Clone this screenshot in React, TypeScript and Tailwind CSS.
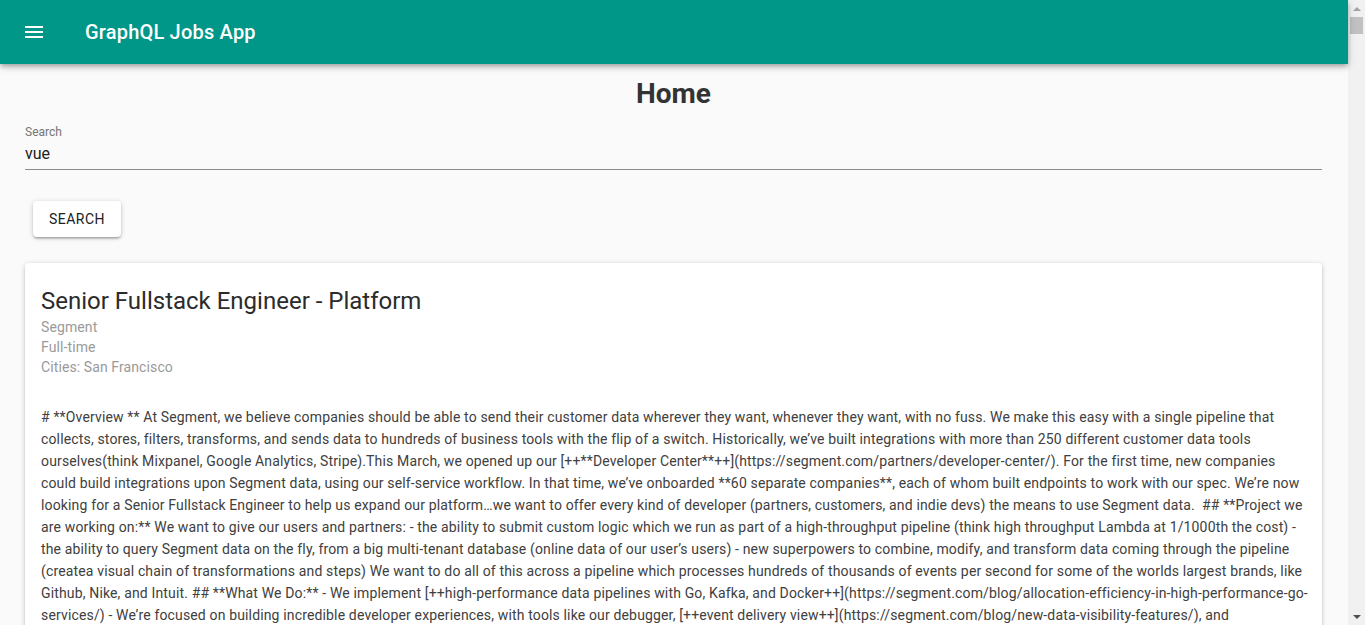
import React from 'react';

const description = [
  '# **Overview ** At Segment, we believe companies should be able to send their customer data wherever they want, whenever they want, with no fuss. We make this easy with a single pipeline that',
  'collects, stores, filters, transforms, and sends data to hundreds of business tools with the flip of a switch. Historically, we’ve built integrations with more than 250 different customer data tools',
  'ourselves(think Mixpanel, Google Analytics, Stripe).This March, we opened up our [++**Developer Center**++](https://segment.com/partners/developer-center/). For the first time, new companies',
  'could build integrations upon Segment data, using our self-service workflow. In that time, we’ve onboarded **60 separate companies**, each of whom built endpoints to work with our spec. We’re now',
  'looking for a Senior Fullstack Engineer to help us expand our platform…we want to offer every kind of developer (partners, customers, and indie devs) the means to use Segment data.  ## **Project we',
  'are working on:** We want to give our users and partners: - the ability to submit custom logic which we run as part of a high-throughput pipeline (think high throughput Lambda at 1/1000th the cost) -',
  'the ability to query Segment data on the fly, from a big multi-tenant database (online data of our user’s users) - new superpowers to combine, modify, and transform data coming through the pipeline',
  '(createa visual chain of transformations and steps) We want to do all of this across a pipeline which processes hundreds of thousands of events per second for some of the worlds largest brands, like',
  'Github, Nike, and Intuit. ## **What We Do:** - We implement [++high-performance data pipelines with Go, Kafka, and Docker++](https://segment.com/blog/allocation-efficiency-in-high-performance-go-',
  'services/) - We’re focused on building incredible developer experiences, with tools like our debugger, [++event delivery view++](https://segment.com/blog/new-data-visibility-features/), and',
];

function MenuIcon() {
  return (
    <svg viewBox="0 0 24 24" className="w-6 h-6 fill-white">
      <path d="M3 18h18v-2H3v2zm0-5h18v-2H3v2zm0-7v2h18V6H3z" />
    </svg>
  );
}

function Scrollbar() {
  return (
    <div className="w-[17px] h-full bg-[#f1f1f1] flex flex-col items-center shrink-0">
      <div className="h-[17px] flex items-center justify-center">
        <div className="w-0 h-0 border-l-[4px] border-r-[4px] border-b-[4px] border-l-transparent border-r-transparent border-b-[#a3a3a3]" />
      </div>
      <div className="w-[13px] h-[17px] bg-[#c1c1c1]" />
      <div className="flex-1" />
      <div className="h-[17px] flex items-center justify-center">
        <div className="w-0 h-0 border-l-[4px] border-r-[4px] border-t-[4px] border-l-transparent border-r-transparent border-t-[#505050]" />
      </div>
    </div>
  );
}

export default function App() {
  return (
    <div className="h-[625px] flex overflow-hidden bg-[#fafafa] font-['Roboto','Liberation_Sans',sans-serif]">
      <div className="flex-1 flex flex-col min-w-0">
        {/* app bar */}
        <header className="h-16 shrink-0 bg-[#009688] flex items-center pl-[22px] relative z-10 shadow-[0_2px_4px_-1px_rgba(0,0,0,0.2),0_4px_5px_0_rgba(0,0,0,0.14),0_1px_10px_0_rgba(0,0,0,0.12)]">
          <MenuIcon />
          <h2 className="ml-[39px] text-white text-[20px] font-medium leading-none tracking-[0.2px]">GraphQL Jobs App</h2>
        </header>

        <main className="pl-[25px] pr-[26px]">
          <h1 className="mt-[14px] text-center text-[28px] leading-[32px] font-bold text-[#333]">Home</h1>

          {/* search field */}
          <div className="mt-[16px]">
            <label className="block text-[12px] leading-[12px] text-[#757575]">Search</label>
            <div className="pt-[6px] pb-[6px] border-b border-[#8c8c8c] text-[16px] leading-[19px] text-[#212121]">vue</div>
          </div>

          <button className="mt-[31px] ml-2 w-[88px] h-9 bg-white rounded text-[14px] font-normal uppercase tracking-[0.5px] text-[#212121] shadow-[0_1px_5px_0_rgba(0,0,0,0.2),0_2px_2px_0_rgba(0,0,0,0.14),0_3px_1px_-2px_rgba(0,0,0,0.12)]">
            Search
          </button>

          {/* job card */}
          <div className="mt-[26px] bg-white rounded px-4 pt-[23px] pb-4 shadow-[0_1px_5px_0_rgba(0,0,0,0.2),0_2px_2px_0_rgba(0,0,0,0.14),0_3px_1px_-2px_rgba(0,0,0,0.12)]">
            <h3 className="text-[24px] leading-[31px] text-[#2b2b2b]">Senior Fullstack Engineer - Platform</h3>
            <div className="text-[14px] leading-[20px] text-[#9a9a9a] tracking-[0.1px]">
              <div>Segment</div>
              <div>Full-time</div>
              <div>Cities: San Francisco</div>
            </div>
            <div className="mt-[29px] text-[14px] leading-[22px] text-[#404040] tracking-[0.15px]">
              {description.map((line, i) => (
                <div key={i} className="whitespace-pre">{line}</div>
              ))}
            </div>
          </div>
        </main>
      </div>
      <Scrollbar />
    </div>
  );
}
